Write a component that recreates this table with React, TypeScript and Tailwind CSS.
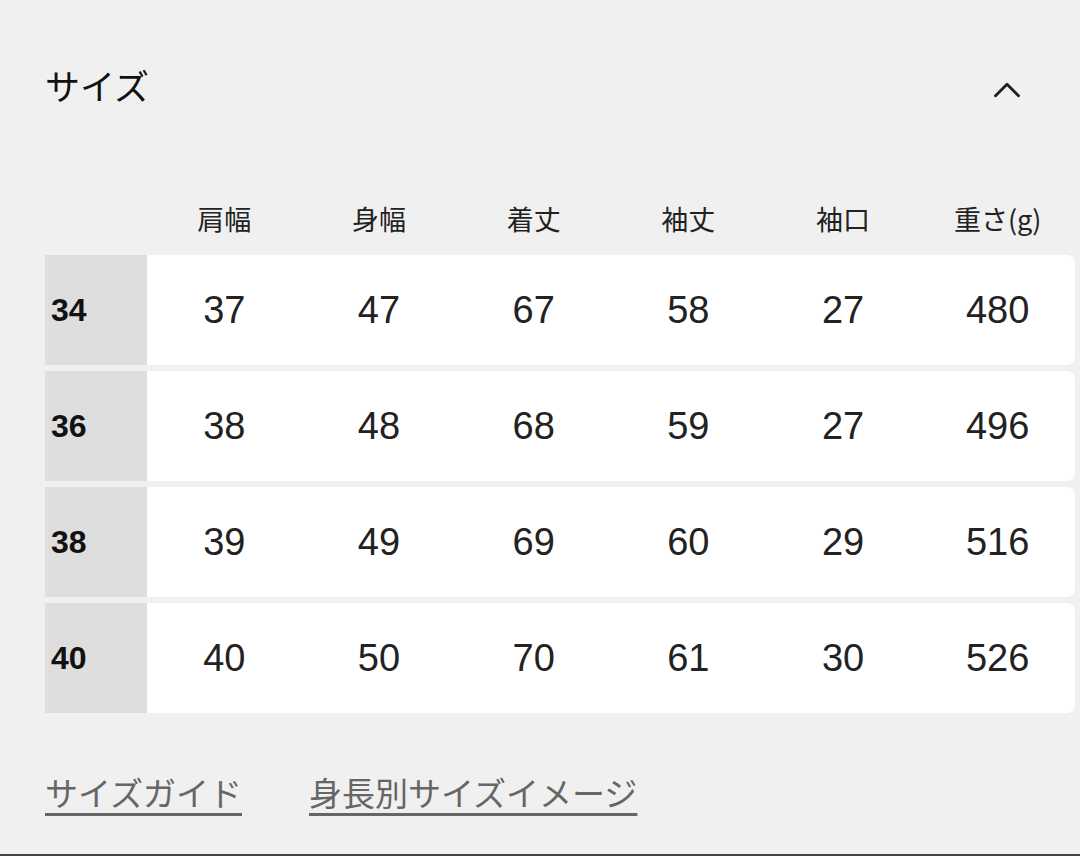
import { ChevronUp } from 'lucide-react';

const columns = ['肩幅', '身幅', '着丈', '袖丈', '袖口', '重さ(g)'];

const rows: { size: string; values: string[] }[] = [
  { size: '34', values: ['37', '47', '67', '58', '27', '480'] },
  { size: '36', values: ['38', '48', '68', '59', '27', '496'] },
  { size: '38', values: ['39', '49', '69', '60', '29', '516'] },
  { size: '40', values: ['40', '50', '70', '61', '30', '526'] },
];

const jp = '[font-family:"Noto_Sans_CJK_JP",sans-serif]';
const num = '[font-family:"Liberation_Sans","Noto_Sans_CJK_JP",sans-serif]';

export default function App() {
  return (
    <div className="w-[1080px] h-[856px] bg-[#f0f0f0] border-b-2 border-[#444] overflow-hidden">
      {/* Header */}
      <div className="flex items-center justify-between pl-[45px] pr-[54px] pt-[62px] h-[112px]">
        <h2 className={`${jp} text-[35px] leading-none text-[#111] -mt-[6px]`}>サイズ</h2>
        <ChevronUp className="w-[46px] h-[46px] text-[#222] mt-[6px] -mr-[4px]" strokeWidth={1.5} />
      </div>

      {/* Size table */}
      <div className="pl-[45px] pr-[5px] mt-[88px]">
        <div className="flex h-[40px] items-center">
          <div className="w-[102px]" />
          {columns.map((c) => (
            <div key={c} className={`${jp} flex-1 text-center text-[27px] leading-none text-[#222] -mt-[4px]`}>
              {c}
            </div>
          ))}
        </div>

        <div className="flex flex-col gap-[6px] mt-[15px]">
          {rows.map((r) => (
            <div key={r.size} className="flex h-[110px] bg-white rounded-r-[8px] overflow-hidden">
              <div className={`${num} w-[102px] bg-[#dedede] flex items-center pl-[6px] text-[32px] font-bold text-[#111]`}>
                {r.size}
              </div>
              {r.values.map((v, i) => (
                <div key={i} className={`${num} flex-1 flex items-center justify-center text-[38px] text-[#222]`}>
                  {v}
                </div>
              ))}
            </div>
          ))}
        </div>
      </div>

      {/* Links */}
      <div className="flex gap-[67px] pl-[45px] mt-[63px]">
        <a href="#" className={`${jp} text-[33px] leading-none text-[#666] underline decoration-[3px] underline-offset-[7px]`}>
          サイズガイド
        </a>
        <a href="#" className={`${jp} text-[33px] leading-none text-[#666] underline decoration-[3px] underline-offset-[7px]`}>
          身長別サイズイメージ
        </a>
      </div>
    </div>
  );
}
